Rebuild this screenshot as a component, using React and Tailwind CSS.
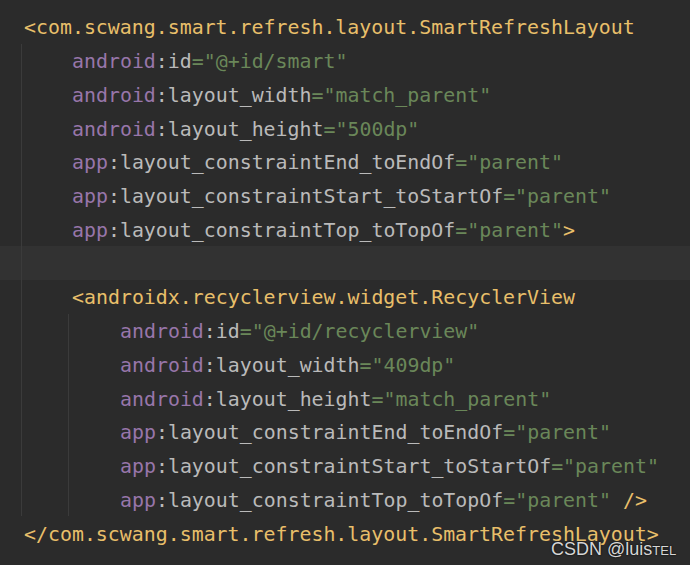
import React from 'react'

const C = {
  tag: 'text-[#e8bf6a]',
  ns: 'text-[#9876aa]',
  attr: 'text-[#bababa]',
  str: 'text-[#6a8759]',
}

// one xml attribute: ns:name="value"
const Attr = ({ ns, name, value, tail }) => (
  <>
    <span className={C.ns}>{ns}</span>
    <span className={C.attr}>:{name}</span>
    <span className={C.str}>="{value}"</span>
    {tail && <span className={C.tag}>{tail}</span>}
  </>
)

const Row = ({ g1, g2, hl, level = 0, children }) => (
  <div className={`flex h-[33.75px] ${hl ? 'bg-[#323232]' : ''}`}>
    <div className="w-[21px] shrink-0" />
    {level === 0 ? (
      <div className="flex items-center pl-[3px] pt-[3px] whitespace-pre">{children}</div>
    ) : (
      <>
        <div className={`w-[47px] shrink-0 ${g1 ? 'border-l border-[#3b3b3b]' : ''}`} />
        {level === 2 && (
          <div className={`w-[48px] shrink-0 ${g2 ? 'border-l border-[#3b3b3b]' : ''}`} />
        )}
        <div className="flex items-center pl-[4px] pt-[3px] whitespace-pre">{children}</div>
      </>
    )}
  </div>
)

export default function App() {
  return (
    <div
      className="relative w-[690px] h-[565px] overflow-hidden bg-[#2b2b2b] pt-[10px] text-[19.9px]"
      style={{ fontFamily: '"DejaVu Sans Mono", "Liberation Mono", monospace' }}
    >
      <Row>
        <span className={C.tag}>{'<com.scwang.smart.refresh.layout.SmartRefreshLayout'}</span>
      </Row>
      <Row level={1} g1>
        <Attr ns="android" name="id" value="@+id/smart" />
      </Row>
      <Row level={1} g1>
        <Attr ns="android" name="layout_width" value="match_parent" />
      </Row>
      <Row level={1} g1>
        <Attr ns="android" name="layout_height" value="500dp" />
      </Row>
      <Row level={1} g1>
        <Attr ns="app" name="layout_constraintEnd_toEndOf" value="parent" />
      </Row>
      <Row level={1} g1>
        <Attr ns="app" name="layout_constraintStart_toStartOf" value="parent" />
      </Row>
      <Row level={1} g1>
        <Attr ns="app" name="layout_constraintTop_toTopOf" value="parent" tail=">" />
      </Row>
      <Row level={1} g1 hl />
      <Row level={1} g1>
        <span className={C.tag}>{'<androidx.recyclerview.widget.RecyclerView'}</span>
      </Row>
      <Row level={2} g1 g2>
        <Attr ns="android" name="id" value="@+id/recyclerview" />
      </Row>
      <Row level={2} g1 g2>
        <Attr ns="android" name="layout_width" value="409dp" />
      </Row>
      <Row level={2} g1 g2>
        <Attr ns="android" name="layout_height" value="match_parent" />
      </Row>
      <Row level={2} g1 g2>
        <Attr ns="app" name="layout_constraintEnd_toEndOf" value="parent" />
      </Row>
      <Row level={2} g1 g2>
        <Attr ns="app" name="layout_constraintStart_toStartOf" value="parent" />
      </Row>
      <Row level={2} g1 g2>
        <Attr ns="app" name="layout_constraintTop_toTopOf" value="parent" tail=" />" />
      </Row>
      <Row>
        <span className={C.tag}>{'</com.scwang.smart.refresh.layout.SmartRefreshLayout>'}</span>
      </Row>

      {/* watermark */}
      <div
        className="absolute left-[551px] top-[536px] text-[18px] text-[#d6d6d6] [text-shadow:0_0_2px_#000]"
        style={{ fontFamily: '"Liberation Sans", Arial, sans-serif' }}
      >
        CSDN @luis<span className="text-[13px]">TEL</span>
      </div>
    </div>
  )
}
